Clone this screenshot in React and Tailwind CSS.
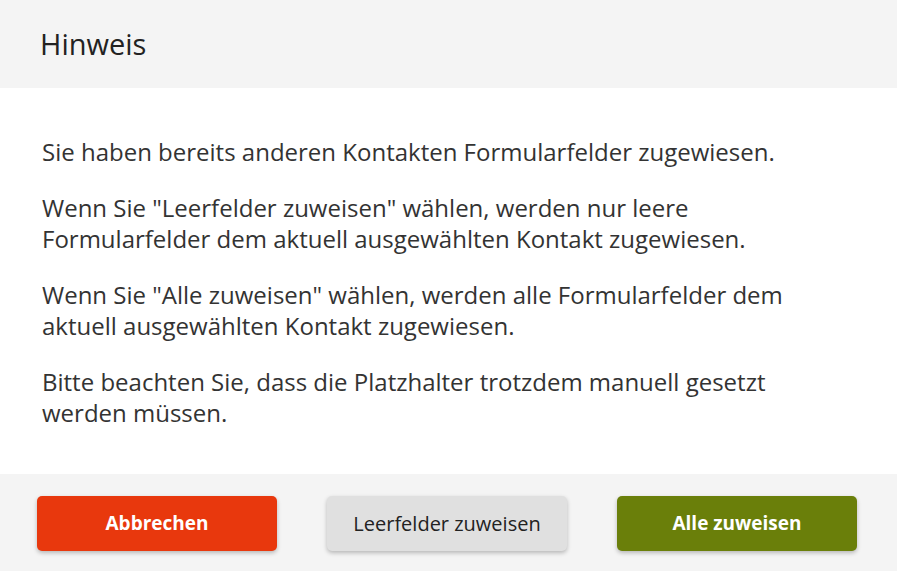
export default function App() {
  return (
    <div className="w-[897px] h-[571px] bg-white flex flex-col text-[#333333]" style={{ fontFamily: '"Open Sans", "Noto Sans", sans-serif' }}>
      <header className="h-[88px] shrink-0 bg-[#f4f4f4] flex items-center px-10">
        <h1 className="text-[29px] text-[#222222]">Hinweis</h1>
      </header>
      <div className="flex-1 px-[42px] pt-[48px] text-[24px] leading-[31px] space-y-[25px]">
        <p>Sie haben bereits anderen Kontakten Formularfelder zugewiesen.</p>
        <p>Wenn Sie "Leerfelder zuweisen" wählen, werden nur leere Formularfelder dem aktuell ausgewählten Kontakt zugewiesen.</p>
        <p>Wenn Sie "Alle zuweisen" wählen, werden alle Formularfelder dem aktuell ausgewählten Kontakt zugewiesen.</p>
        <p>Bitte beachten Sie, dass die Platzhalter trotzdem manuell gesetzt werden müssen.</p>
      </div>
      <footer className="h-[97px] shrink-0 bg-[#f4f4f4] flex items-start pt-[22px] pl-[37px] gap-[50px]">
        <button className="w-[240px] h-[55px] rounded-[5px] bg-[#e8380d] text-white text-[19px] font-bold shadow-[0_2px_4px_rgba(0,0,0,0.25)]">
          Abbrechen
        </button>
        <button className="w-[240px] h-[55px] rounded-[5px] bg-[#e0e0e0] text-[#222222] text-[20px] shadow-[0_2px_4px_rgba(0,0,0,0.25)]">
          Leerfelder zuweisen
        </button>
        <button className="w-[240px] h-[55px] rounded-[5px] bg-[#6a7f0a] text-white text-[19px] font-bold shadow-[0_2px_4px_rgba(0,0,0,0.25)]">
          Alle zuweisen
        </button>
      </footer>
    </div>
  );
}
